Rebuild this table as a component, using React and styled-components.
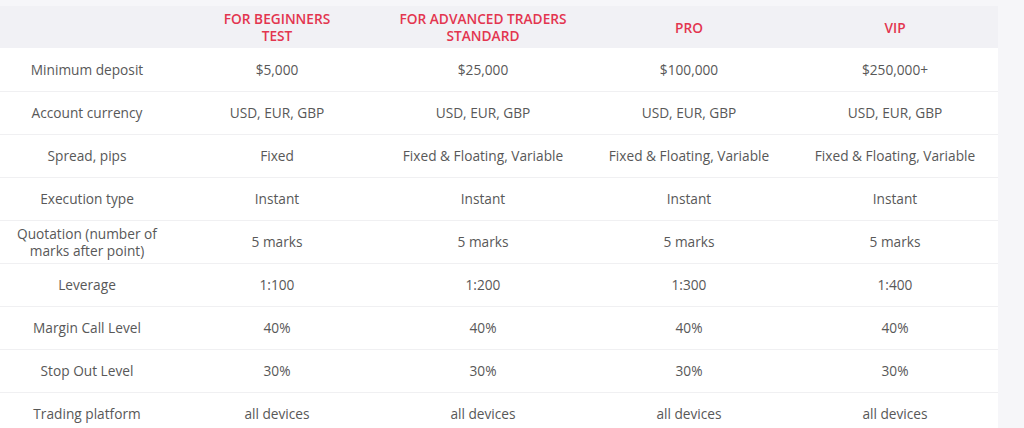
import styled, { createGlobalStyle } from "styled-components";

const GlobalStyle = createGlobalStyle`
  body {
    margin: 0;
    background: #f6f6f9;
    font-family: "Open Sans", "Liberation Sans", sans-serif;
  }
`;

const plans = [
  { title: ["FOR BEGINNERS", "TEST"] },
  { title: ["FOR ADVANCED TRADERS", "STANDARD"] },
  { title: ["PRO"] },
  { title: ["VIP"] },
];

const rows = [
  { label: "Minimum deposit", values: ["$5,000", "$25,000", "$100,000", "$250,000+"] },
  { label: "Account currency", values: Array(4).fill("USD, EUR, GBP") },
  {
    label: "Spread, pips",
    values: ["Fixed", "Fixed & Floating, Variable", "Fixed & Floating, Variable", "Fixed & Floating, Variable"],
  },
  { label: "Execution type", values: Array(4).fill("Instant") },
  { label: "Quotation (number of marks after point)", values: Array(4).fill("5 marks") },
  { label: "Leverage", values: ["1:100", "1:200", "1:300", "1:400"] },
  { label: "Margin Call Level", values: Array(4).fill("40%") },
  { label: "Stop Out Level", values: Array(4).fill("30%") },
  { label: "Trading platform", values: Array(4).fill("all devices") },
];

const Page = styled.div`
  padding-top: 6px;
  height: 422px;
  overflow: hidden;
`;

const Table = styled.table`
  width: 998px;
  border-collapse: collapse;
  table-layout: fixed;
  background: #fff;
`;

const Col = styled.col`
  width: ${(props) => props.$width}px;
`;

const HeadRow = styled.tr`
  background: #f1f1f5;
  height: 42px;
`;

const HeadCell = styled.th`
  padding: 0 8px;
  color: #e3354f;
  font-size: 13.7px;
  font-weight: 600;
  line-height: 17px;
  text-align: center;
  vertical-align: middle;
`;

const Row = styled.tr`
  height: 43px;
`;

const Cell = styled.td`
  padding: 0 10px;
  border-bottom: 1px solid #f0f0f2;
  color: #585858;
  font-size: 13.7px;
  line-height: 17px;
  text-align: center;
  vertical-align: middle;
`;

export default function App() {
  return (
    <>
      <GlobalStyle />
      <Page>
        <Table>
          <colgroup>
            <Col $width={174} />
            {plans.map((p) => (
              <Col key={p.title.join()} $width={206} />
            ))}
          </colgroup>
          <thead>
            <HeadRow>
              <HeadCell />
              {plans.map((p) => (
                <HeadCell key={p.title.join()}>
                  {p.title.map((t) => (
                    <div key={t}>{t}</div>
                  ))}
                </HeadCell>
              ))}
            </HeadRow>
          </thead>
          <tbody>
            {rows.map((r) => (
              <Row key={r.label}>
                <Cell>{r.label}</Cell>
                {r.values.map((v, i) => (
                  <Cell key={i}>{v}</Cell>
                ))}
              </Row>
            ))}
          </tbody>
        </Table>
      </Page>
    </>
  );
}
